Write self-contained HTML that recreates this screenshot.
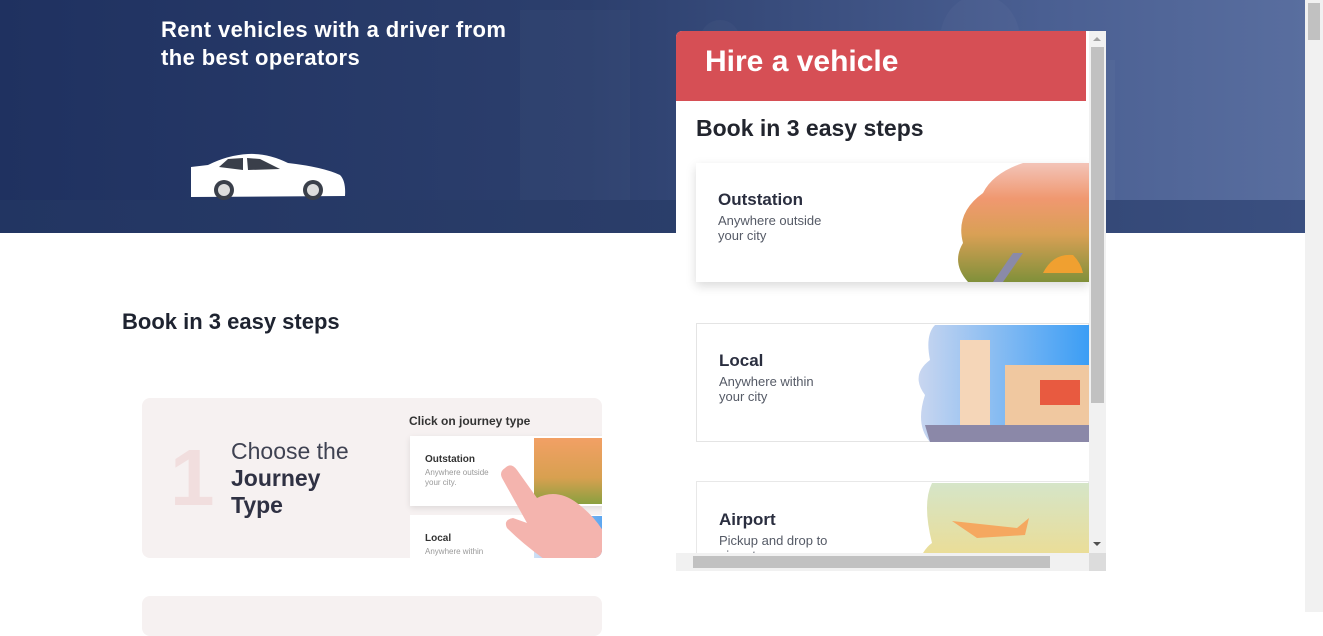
<!DOCTYPE html>
<html><head><meta charset="utf-8"><style>
*{margin:0;padding:0;box-sizing:border-box}
body{width:1323px;height:612px;overflow:hidden;background:#fff;font-family:"Liberation Sans",sans-serif;position:relative}
.abs{position:absolute}
.banner{left:0;top:0;width:1305px;height:233px;background:linear-gradient(90deg,#1f3160 0%,#2c3f6d 45%,#4a5f92 80%,#596e9f 100%)}
.strip{left:0;top:200px;width:1305px;height:33px;background:linear-gradient(90deg,#223562,#2c3f6b 60%,#3a4f80)}
.h1{left:161px;top:16px;color:#fff;font-size:22px;line-height:28px;font-weight:bold;letter-spacing:0.4px}
.sb{left:1305px;top:0;width:18px;height:612px;background:#f1f1f1}
.sbt{left:1308px;top:3px;width:12px;height:37px;background:#c1c1c1}
.steps{left:122px;top:309px;font-size:22px;font-weight:bold;color:#1e2330}
.card1{left:142px;top:398px;width:460px;height:160px;background:#f6f1f1;border-radius:8px;overflow:hidden}
.card2{left:142px;top:596px;width:460px;height:40px;background:#f6f1f1;border-radius:8px}
.pop{left:676px;top:31px;width:430px;height:540px;background:#fff;overflow:hidden;border-radius:6px 0 0 0}
.red{left:0;top:0;width:410px;height:70px;background:#d64f55}
.card{position:absolute;left:20px;width:393px;height:119px;background:#fff}
.ct{position:absolute;left:22px;font-size:17px;font-weight:bold;color:#2a2e3f}
.cs{position:absolute;left:22px;font-size:13px;color:#555a66;line-height:15px}
</style></head><body>
<div class="abs banner"></div>
<svg class="abs" style="left:500px;top:0" width="700" height="205" viewBox="0 0 700 205"><g fill="#ffffff" opacity="0.025"><rect x="20" y="10" width="110" height="195"/><rect x="200" y="40" width="40" height="165"/><circle cx="220" cy="40" r="20"/><rect x="380" y="30" width="200" height="175"/><ellipse cx="480" cy="40" rx="40" ry="45"/><rect x="330" y="60" width="15" height="145"/><rect x="600" y="60" width="15" height="145"/></g></svg>
<div class="abs strip"></div>
<div class="abs h1">Rent vehicles with a driver from<br>the best operators</div>
<svg class="abs" style="left:188px;top:153px" width="160" height="50" viewBox="0 0 160 50">
<path d="M3 14 L20 12 Q40 2 60 1 Q80 0 100 10 Q135 14 152 22 Q158 28 157 43 L3 44 Z" fill="#fff"/>
<path d="M31 14 L40 6 L55 5 L55 17 Z" fill="#3a3f4a"/><path d="M59 5 L72 6 L92 16 L60 17 Z" fill="#3a3f4a"/>
<circle cx="36" cy="37" r="10" fill="#3a3f4a"/><circle cx="36" cy="37" r="6" fill="#ddd"/>
<circle cx="125" cy="37" r="10" fill="#3a3f4a"/><circle cx="125" cy="37" r="6" fill="#ddd"/></svg>
<div class="abs sb"></div><div class="abs sbt"></div>
<div class="abs steps">Book in 3 easy steps</div>
<div class="abs card1">
<div class="abs" style="left:28px;top:40px;font-size:80px;font-weight:bold;color:#f1dede;line-height:80px">1</div>
<div class="abs" style="left:89px;top:40px;font-size:23px;color:#3f4252;line-height:27px">Choose the<br><b style="color:#2f3143">Journey<br>Type</b></div>
<div class="abs" style="left:267px;top:16px;font-size:12px;font-weight:bold;color:#333">Click on journey type</div>
<div class="abs" style="left:268px;top:38px;width:200px;height:70px;background:#fff;box-shadow:0 2px 6px rgba(0,0,0,.1)"><div class="abs" style="left:15px;top:18px;font-size:10px;font-weight:bold;color:#333">Outstation</div><div class="abs" style="left:15px;top:32px;font-size:8px;color:#999;line-height:10px">Anywhere outside<br>your city.</div></div>
<div class="abs" style="left:392px;top:40px;width:70px;height:66px;background:linear-gradient(#f2a065,#d8a050 60%,#8aa040)"></div>
<div class="abs" style="left:268px;top:117px;width:200px;height:50px;background:#fff"><div class="abs" style="left:15px;top:18px;font-size:10px;font-weight:bold;color:#333">Local</div><div class="abs" style="left:15px;top:32px;font-size:8px;color:#999">Anywhere within</div></div>
<div class="abs" style="left:392px;top:118px;width:70px;height:45px;background:linear-gradient(90deg,#cfe0f5,#5aa5f0)"></div>
<svg class="abs" style="left:355px;top:60px" width="110" height="110"><path d="M8 10 Q14 4 20 12 L40 40 Q60 30 80 45 Q100 60 110 80 L110 110 L60 110 Q30 90 10 70 Q6 62 16 60 L30 65 L5 20 Q2 14 8 10Z" fill="#f4b4ae"/></svg>
</div>
<div class="abs card2"></div>
<div class="abs pop">
<div class="abs red"></div>
<div class="abs" style="left:29px;top:14px;font-size:30px;font-weight:bold;color:#fff">Hire a vehicle</div>
<div class="abs" style="left:20px;top:84px;font-size:23px;font-weight:bold;color:#22252e">Book in 3 easy steps</div>
<div class="card" style="top:132px;box-shadow:0 4px 10px rgba(0,0,0,.15)">
<div class="ct" style="top:27px">Outstation</div><div class="cs" style="top:50px">Anywhere outside<br>your city</div>
<svg class="abs" style="left:257px;top:0" width="136" height="119"><defs><linearGradient id="g1" x1="0" y1="0" x2="0" y2="1"><stop offset="0" stop-color="#f3c4b8"/><stop offset=".3" stop-color="#f09870"/><stop offset=".6" stop-color="#d9a055"/><stop offset="1" stop-color="#80903a"/></linearGradient></defs><path d="M30 30 Q40 10 70 0 L136 0 L136 119 L15 119 Q-2 100 10 80 Q2 50 30 30Z" fill="url(#g1)"/><path d="M90 110 Q100 90 120 92 Q128 100 130 110Z" fill="#f0a030"/><path d="M60 90 L70 90 L50 119 L40 119Z" fill="#8a8aa8"/></svg>
</div>
<div class="card" style="top:292px;border:1px solid #e4e4e4">
<div class="ct" style="top:27px">Local</div><div class="cs" style="top:50px">Anywhere within<br>your city</div>
<svg class="abs" style="left:218px;top:1px" width="175" height="117"><defs><linearGradient id="g2" x1="0" x2="1"><stop offset="0" stop-color="#c9d6f0"/><stop offset="1" stop-color="#3a9df5"/></linearGradient></defs><path d="M20 0 L175 0 L175 117 L15 117 Q0 100 10 70 Q-5 50 15 35 Q10 10 20 0Z" fill="url(#g2)"/><rect x="45" y="15" width="30" height="85" fill="#f5d6b8"/><rect x="90" y="40" width="85" height="60" fill="#f0c8a0"/><rect x="125" y="55" width="40" height="25" fill="#e85a40"/><path d="M10 100 L175 100 L175 117 L15 117Z" fill="#8b88a8"/></svg>
</div>
<div class="card" style="top:450px;border:1px solid #e8e8e8">
<div class="ct" style="top:28px">Airport</div><div class="cs" style="top:51px">Pickup and drop to<br>airport</div>
<svg class="abs" style="left:210px;top:1px" width="183" height="117"><defs><linearGradient id="g3" x1="0" y1="0" x2="0" y2="1"><stop offset="0" stop-color="#d5e5c8"/><stop offset="1" stop-color="#f8d878"/></linearGradient></defs><path d="M25 0 L183 0 L183 117 L0 117 Q10 70 25 60 Q15 20 25 0Z" fill="url(#g3)"/><path d="M45 38 L110 45 L122 35 L118 52 L70 55Z" fill="#f5a860"/></svg>
</div>
<div class="abs" style="left:413px;top:0;width:17px;height:522px;background:#f1f1f1"></div>
<div class="abs" style="left:415px;top:16px;width:13px;height:356px;background:#c1c1c1"></div>
<div class="abs" style="left:417px;top:6px;width:0;height:0;border:4px solid transparent;border-bottom-color:#a3a3a3;border-top:0"></div>
<div class="abs" style="left:417px;top:511px;width:0;height:0;border:4px solid transparent;border-top-color:#505050;border-bottom:0"></div>
<div class="abs" style="left:0;top:522px;width:413px;height:18px;background:#f1f1f1"></div>
<div class="abs" style="left:17px;top:525px;width:357px;height:12px;background:#c1c1c1"></div>
<div class="abs" style="left:413px;top:522px;width:17px;height:18px;background:#dcdcdc"></div>
</div>
</body></html>
